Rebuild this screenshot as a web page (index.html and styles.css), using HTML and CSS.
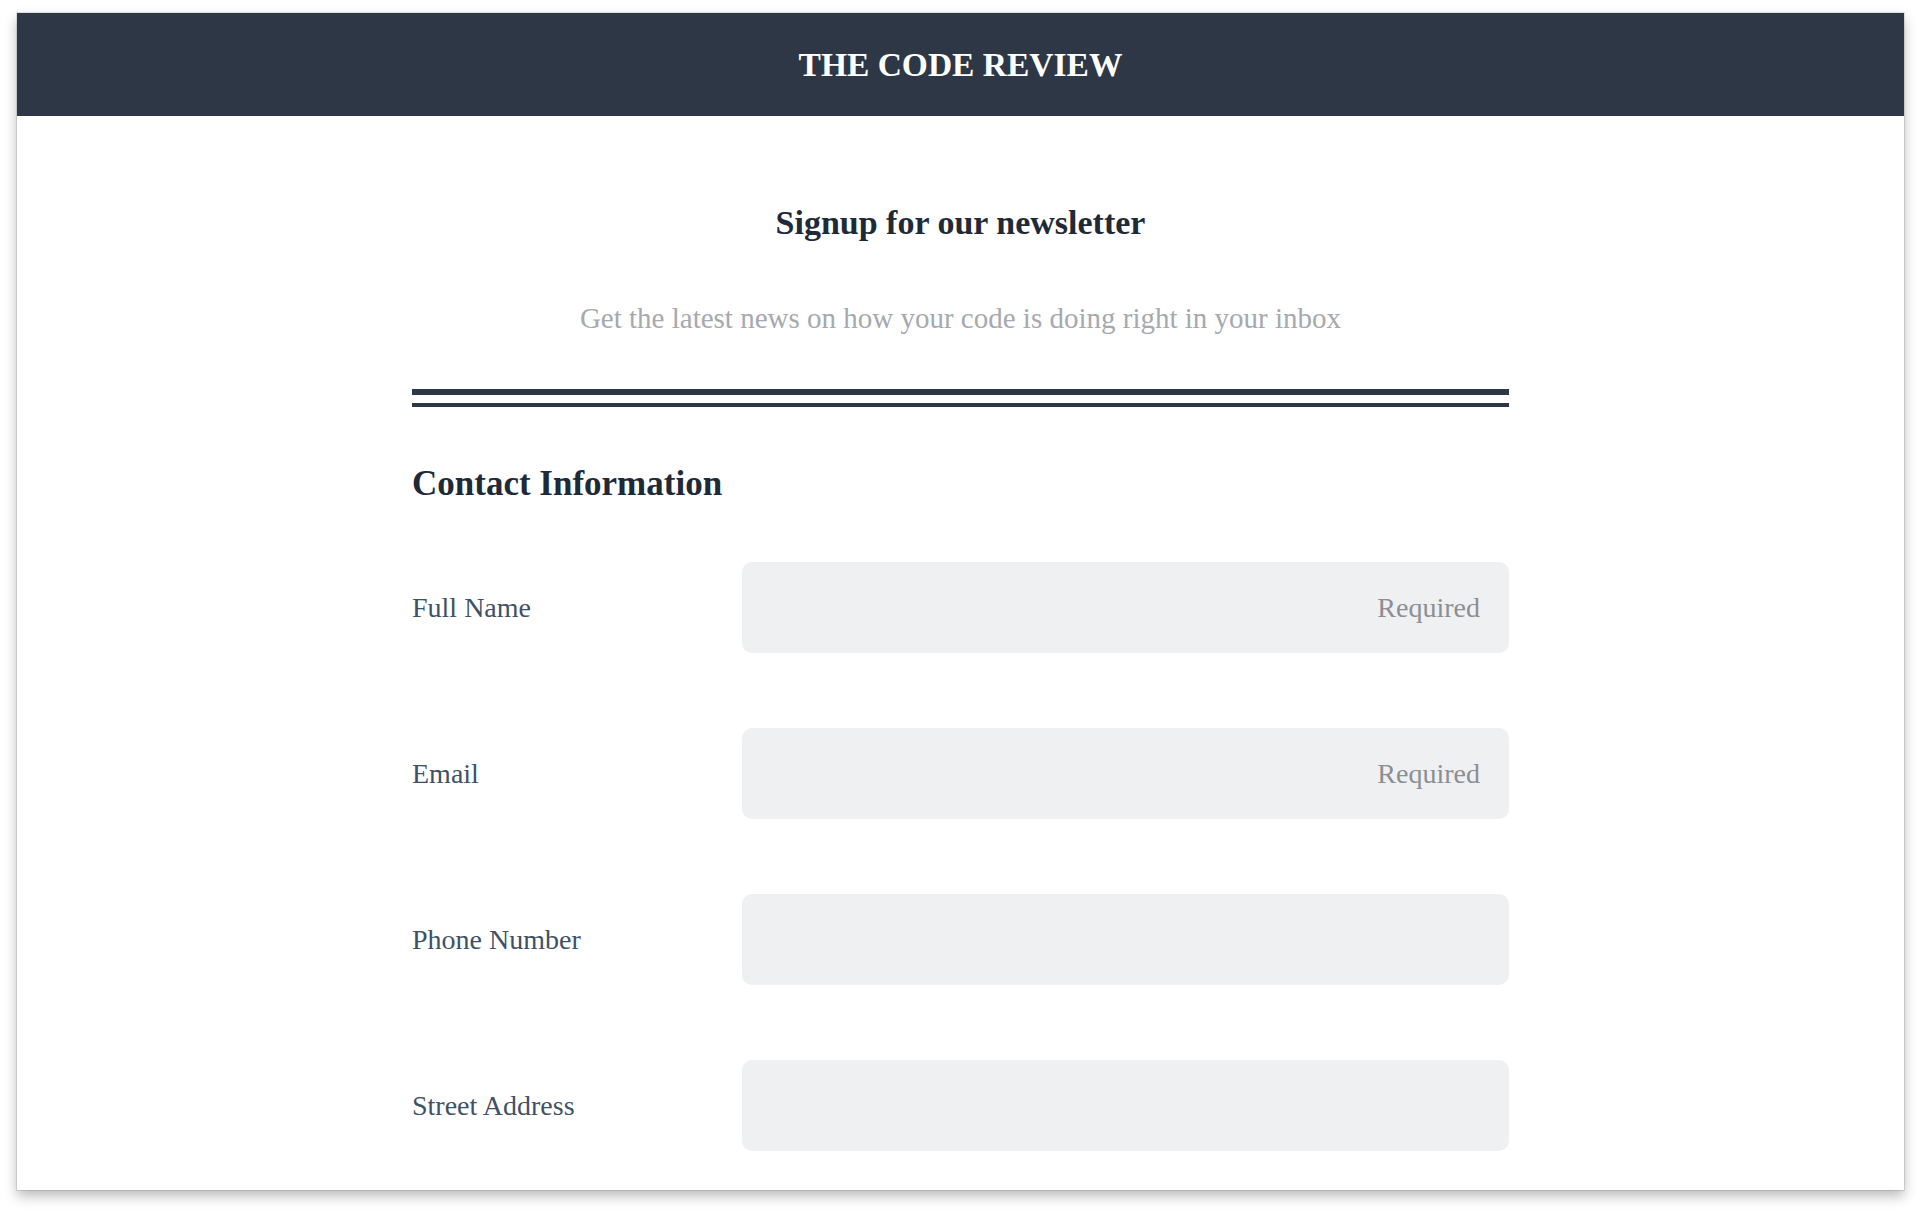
FILE: index.html
```html
<!DOCTYPE html>
<html lang="en">
<head>
<meta charset="utf-8">
<title>The Code Review — Newsletter</title>
<link rel="stylesheet" href="styles.css">
</head>
<body>
<div class="window">
  <header class="topbar">
    <h1 class="brand">THE CODE REVIEW</h1>
  </header>
  <main class="content">
    <h2 class="title">Signup for our newsletter</h2>
    <p class="subtitle">Get the latest news on how your code is doing right in your inbox</p>
    <div class="rule"></div>
    <h3 class="section">Contact Information</h3>
    <form class="form">
      <label class="label" for="name">Full Name</label>
      <input class="field" id="name" type="text" placeholder="Required">
      <label class="label" for="email">Email</label>
      <input class="field" id="email" type="email" placeholder="Required">
      <label class="label" for="phone">Phone Number</label>
      <input class="field" id="phone" type="tel">
      <label class="label" for="street">Street Address</label>
      <input class="field" id="street" type="text">
    </form>
  </main>
</div>
</body>
</html>
```

FILE: styles.css
```css
html, body {
  margin: 0;
  padding: 0;
  background: #ffffff;
}

body {
  font-family: "Liberation Serif", "Times New Roman", serif;
  padding: 13px 16px 0 17px;
  height: 1214px;
  box-sizing: border-box;
  overflow: hidden;
}

.window {
  width: 1887px;
  height: 1177px;
  background: #ffffff;
  overflow: hidden;
  box-shadow: 0 0 0 1px rgba(0, 0, 0, 0.10), 0 6px 12px rgba(0, 0, 0, 0.28);
}

.topbar {
  height: 103px;
  background: #2d3745;
  display: flex;
  align-items: center;
  justify-content: center;
}

.brand {
  margin: 0;
  color: #ffffff;
  font-size: 33.5px;
  line-height: 1;
  font-weight: bold;
}

.content {
  width: 1097px;
  margin: 0 auto;
  padding-top: 90px;
}

.title {
  margin: 0;
  text-align: center;
  font-size: 34px;
  line-height: 34px;
  font-weight: bold;
  color: #1f2a38;
}

.subtitle {
  margin: 64px 0 0;
  text-align: center;
  font-size: 29px;
  line-height: 29px;
  color: #a6a9af;
}

.rule {
  margin-top: 56px;
  height: 8px;
  border-top: 6px solid #2d3745;
  border-bottom: 4px solid #2d3745;
}

.section {
  margin: 59px 0 0;
  font-size: 35px;
  line-height: 35px;
  font-weight: bold;
  color: #1f2a38;
}

.form {
  margin-top: 61px;
  display: grid;
  grid-template-columns: 330px 1fr;
  row-gap: 75px;
  align-items: center;
}

.label {
  font-size: 28px;
  line-height: 28px;
  color: #3f5167;
}

.field {
  height: 91px;
  box-sizing: border-box;
  border: none;
  border-radius: 10px;
  background: #eff0f2;
  padding: 0 29px;
  font-family: "Liberation Serif", "Times New Roman", serif;
  font-size: 28px;
  color: #3f5167;
  text-align: right;
  outline: none;
}

.field::placeholder {
  color: #8b8e93;
  opacity: 1;
}
```
